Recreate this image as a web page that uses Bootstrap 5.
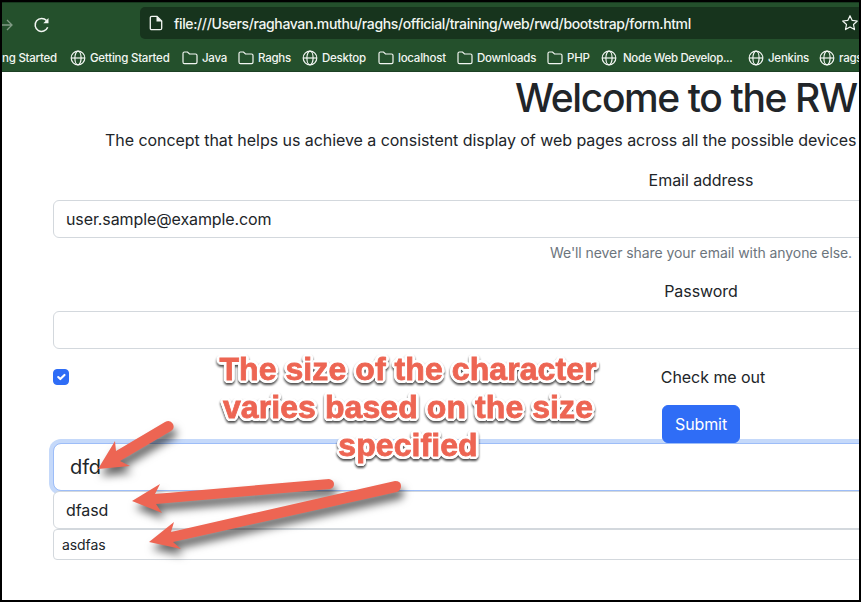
<!DOCTYPE html>
<html lang="en">
<head>
<meta charset="utf-8">
<meta name="viewport" content="width=device-width, initial-scale=1">
<title>form.html</title>
<link href="https://cdn.jsdelivr.net/npm/bootstrap@5.3.0/dist/css/bootstrap.min.css" rel="stylesheet">
<style>
body{font-family:Inter,"Liberation Sans",sans-serif;color:#212529;overflow:hidden;letter-spacing:-.05px}
.window-frame{width:861px;height:602px;border:2px solid #000;background:#fff}
.browser-bar{height:70px;background:#24502c;border-top:1px solid #17391f;border-bottom:1px solid #1d4125;color:#f2f6f2}
.address-row{height:39px;padding-top:4px}
.nav-icons{width:138px}
.reload-icon{margin-left:20px}
.address-box{background:#17341d;height:32px;border-radius:5px 0 0 5px;padding-left:8px}
.address-text{font-size:14px;line-height:20px;letter-spacing:-.37px;margin:1px 0 0 10px;font-weight:500}
.bookmark-row{height:30px;padding-top:2px;font-size:11.5px;font-weight:500;line-height:16px;letter-spacing:-.24px;stroke-width:1.2}
.bm{display:flex;align-items:center;flex:none;gap:4px}
.w-a{width:68px}.w-b{width:112px}.w-c{width:56px}.w-d{width:64px}.w-e{width:76px}.w-f{width:79px}.w-g{width:90px}.w-h{width:54px}.w-i{width:147px;gap:6px;letter-spacing:-.34px}.w-j{width:71px}
svg{display:block;fill:none;stroke:currentColor;flex:none}
.page-form{width:1320px;margin-left:39px}
.page-title{padding:2px 0 0 462px;margin-bottom:6px;font-size:39px;line-height:48px;letter-spacing:-1.38px}
.intro{padding-left:52px}
.hint{padding-left:497px;color:#6c757d;letter-spacing:-.07px}
.form-control{border-color:#d3d8dd}
.form-control,.btn{letter-spacing:-.1px}
.form-check-input:checked,.btn-primary{background-color:#2f6df6;border-color:#2f6df6}
.is-focused{border-color:#9dbdf8;box-shadow:0 0 0 4px #c5d9fa}
.submit-row{position:relative;z-index:1}
.note{left:215px;top:348px;width:382px;font:700 32px/38px "Liberation Sans",Arial,sans-serif;letter-spacing:.08px;color:#ed6553;-webkit-text-stroke:.8px #ed6553;
text-shadow:3px 0 #fff,-3px 0 #fff,0 3px #fff,0 -3px #fff,2.1px 2.1px #fff,-2.1px 2.1px #fff,2.1px -2.1px #fff,-2.1px -2.1px #fff,2.8px 1.1px #fff,-2.8px 1.1px #fff,2.8px -1.1px #fff,-2.8px -1.1px #fff,1.1px 2.8px #fff,-1.1px 2.8px #fff,1.1px -2.8px #fff,-1.1px -2.8px #fff;
filter:drop-shadow(0 2px 1px rgba(0,0,0,.7))}
.arrows{left:-2px;top:-2px;z-index:2;stroke:none;fill:#ed6553;filter:drop-shadow(3px 7px 4px rgba(0,0,0,.6))}
</style>
</head>
<body>
<svg class="d-none">
<symbol id="globe" viewBox="0 0 16 16"><circle cx="8" cy="8" r="6.8"/><ellipse cx="8" cy="8" rx="3.1" ry="6.8"/><path d="M1.2 8h13.6"/></symbol>
<symbol id="folder" viewBox="0 0 16 14"><path d="M1 10.8V2.5Q1 1 2.5 1h3l2 2h6Q15 3 15 4.5v6.8q0 1.4-1.5 1.4h-11Q1 12.700 1 11z"/></symbol>
</svg>
<div class="window-frame position-relative overflow-hidden">
<header class="browser-bar overflow-hidden">
<div class="address-row d-flex">
<div class="nav-icons d-flex align-items-center">
<svg width="11" height="14" viewBox="0 0 11 14" stroke-width="1.3" opacity=".45"><path d="M0 7h10M5 2l5 5-5 5"/></svg>
<svg class="reload-icon" width="18" height="18" viewBox="0 0 18 18" stroke-width="1.5"><path d="M14.700 11.300A6.500 6.500 0 1 1 13.500 4.600"/><path d="M15.500 2v5.200h-5.200z" fill="currentColor" stroke="none"/></svg>
</div>
<div class="address-box d-flex align-items-center flex-grow-1">
<svg width="16" height="16" viewBox="0 0 16 16" stroke-width="1.300"><path d="M2.300 2.800Q2.300 1.300 3.800 1.300H9L13.700 6v7.200q0 1.500-1.500 1.500H3.800q-1.500 0-1.500-1.500z"/><path d="M8.500 1v5.500h5.500z" fill="currentColor" stroke="none"/></svg>
<span class="address-text text-nowrap">file:///Users/raghavan.muthu/raghs/official/training/web/rwd/bootstrap/form.html</span>
<svg class="ms-auto" width="18" height="18" viewBox="0 0 18 18" stroke-width="1.200" stroke-linejoin="round"><path d="M9 1.700l2.200 4.700 5.100.6-3.800 3.500 1 5.100L9 13.100l-4.500 2.500 1-5.100L1.700 7l5.100-.6z"/></svg>
</div>
</div>
<nav class="bookmark-row d-flex align-items-center text-nowrap">
<span class="bm w-a">ng Started</span>
<span class="bm w-b"><svg width="16" height="16"><use href="#globe"/></svg>Getting Started</span>
<span class="bm w-c"><svg width="16" height="14"><use href="#folder"/></svg>Java</span>
<span class="bm w-d"><svg width="16" height="14"><use href="#folder"/></svg>Raghs</span>
<span class="bm w-e"><svg width="16" height="16"><use href="#globe"/></svg>Desktop</span>
<span class="bm w-f"><svg width="16" height="14"><use href="#folder"/></svg>localhost</span>
<span class="bm w-g"><svg width="16" height="14"><use href="#folder"/></svg>Downloads</span>
<span class="bm w-h"><svg width="16" height="14"><use href="#folder"/></svg>PHP</span>
<span class="bm w-i"><svg width="16" height="16"><use href="#globe"/></svg>Node Web Develop...</span>
<span class="bm w-j"><svg width="16" height="16"><use href="#globe"/></svg>Jenkins</span>
<span class="bm"><svg width="16" height="16"><use href="#globe"/></svg>rags</span>
</nav>
</header>
<main class="page-form px-2 text-center text-nowrap">
<div class="px-1">
<h1 class="page-title text-start">Welcome to the RW</h1>
<p class="intro text-start">The concept that helps us achieve a consistent display of web pages across all the possible devices</p>
<form>
<div class="mb-3"><label class="form-label" for="mail">Email address</label><input id="mail" type="email" class="form-control" value="user.sample@example.com"><div class="form-text text-start hint">We'll never share your email with anyone else.</div></div>
<div class="mb-3"><label class="form-label" for="pass">Password</label><input id="pass" type="password" class="form-control"></div>
<div class="mb-3 form-check"><input id="chk" type="checkbox" class="form-check-input" checked><label class="form-check-label" for="chk">Check me out</label></div>
<div class="submit-row"><button type="button" class="btn btn-primary">Submit</button></div>
<input class="form-control form-control-lg is-focused" value="dfd" aria-label="Large">
<input class="form-control" value="dfasd" aria-label="Default">
<input class="form-control form-control-sm" value="asdfas" aria-label="Small">
</form>
</div>
</main>
<div class="note position-absolute text-center text-nowrap">The size of the character<br>varies based on the size<br>specified</div>
<svg class="arrows position-absolute" width="861" height="602" viewBox="0 0 861 602">
<path d="M98 469L115 441 116 451 165 422Q170 419 173 424 175 429 171 431L120 461 130 466z"/>
<path d="M132 501L160 484 155 494 329 479Q334 480 334 484 334 488 330 489L156 504 162 513z"/>
<path d="M149 542L174 522 171 532 395 481Q401 481 401 486 401 490 397 492L173 542 181 549z"/>
</svg>
</div>
<script src="https://cdn.jsdelivr.net/npm/bootstrap@5.3.0/dist/js/bootstrap.bundle.min.js"></script>
</body>
</html>
